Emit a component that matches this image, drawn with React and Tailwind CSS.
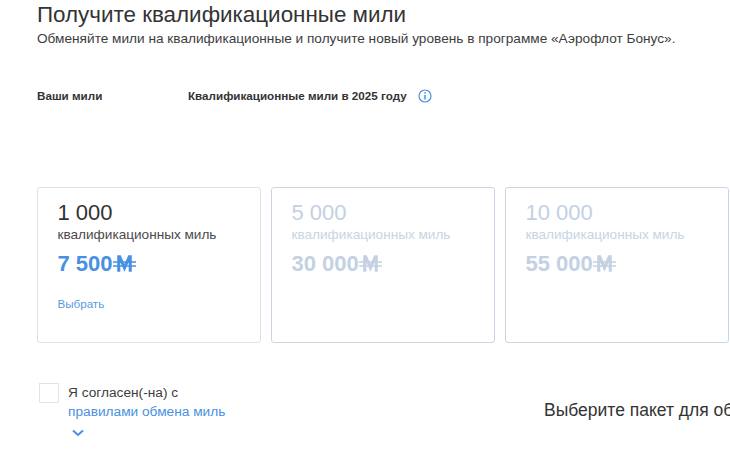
import React from "react";

function Mile({ className }) {
  return (
    <svg viewBox="0 0 24 18" className={className} fill="none" stroke="currentColor" aria-hidden="true">
      <path d="M6 17V1.500h1L12 13l5-11.500h1V17" strokeWidth="3.200" strokeLinejoin="miter" />
      <path d="M0 7h24M0 11h24" strokeWidth="1.600" />
    </svg>
  );
}

function Card({ qty, price, active }) {
  return (
    <div
      className={
        "w-[224px] h-[156px] shrink-0 rounded-[3px] border bg-white pl-[19.500px] pt-[13px] " +
        (active ? "border-[#dfe1e4]" : "border-[#ccd3e3]")
      }
    >
      <div className={"text-[22px] leading-[24px] " + (active ? "text-[#333333]" : "text-[#c3d1e3]")}>{qty}</div>
      <div className={"text-[13.600px] leading-[20px] " + (active ? "text-[#4a4a4a]" : "text-[#c7d4e5]")}>
        квалификационных миль
      </div>
      <div
        className={
          "mt-[6px] flex items-center text-[22px] leading-[26px] font-bold " +
          (active ? "text-[#4a90e2]" : "text-[#c3d1e3]")
        }
      >
        <span>{price}</span>
        <Mile className="h-[18px] w-[23px]" />
      </div>
      {active && <div className="mt-[19px] text-[11.600px] leading-[16px] text-[#5b9ae0]">Выбрать</div>}
    </div>
  );
}

export default function App() {
  return (
    <div className="h-[460px] w-[730px] overflow-hidden bg-white pl-[37px] font-['Liberation_Sans',sans-serif]">
      <h1 className="pt-0 text-[22.400px] leading-[30px] font-normal text-[#333333]">Получите квалификационные мили</h1>
      <p className="text-[13.650px] leading-[18px] text-[#3d3d3d]">
        Обменяйте мили на квалификационные и получите новый уровень в программе «Аэрофлот Бонус».
      </p>

      <div className="mt-[40px] flex items-center text-[11.650px] leading-[16px] font-bold text-[#333333]">
        <span className="w-[151px]">Ваши мили</span>
        <span>Квалификационные мили в 2025 году</span>
        <svg viewBox="0 0 14 14" className="ml-[11px] h-[14px] w-[14px] text-[#4a90e2]" fill="none" stroke="currentColor">
          <circle cx="7" cy="7" r="6" strokeWidth="1.200" />
          <path d="M7 6v4.500" strokeWidth="1.500" />
          <path d="M7 3.200v1.500" strokeWidth="1.500" />
        </svg>
      </div>

      <div className="mt-[83px] flex gap-[10px]">
        <Card qty="1 000" price="7 500" active />
        <Card qty="5 000" price="30 000" />
        <Card qty="10 000" price="55 000" />
      </div>

      <div className="mt-[39px] flex items-start pl-[2px]">
        <div className="mt-px h-5 w-5 shrink-0 border border-[#e3e3e3] bg-white" />
        <div className="ml-[9px] w-[476px] shrink-0 text-[13.700px] leading-[19px]">
          <div className="pt-px text-[#3d3d3d]">Я согласен(-на) с</div>
          <div className="text-[#4a90e2]">правилами обмена миль</div>
          <svg viewBox="0 0 12 8" className="ml-[4px] mt-[8px] h-[8px] w-[12px] text-[#4a90e2]" fill="none" stroke="currentColor" strokeWidth="2">
            <path d="M1 1.500l5 4.500 5-4.500" />
          </svg>
        </div>
        <div className="mt-[18px] whitespace-nowrap text-[17.500px] leading-[20px] text-[#333333]">Выберите пакет для обмена</div>
      </div>
    </div>
  );
}
